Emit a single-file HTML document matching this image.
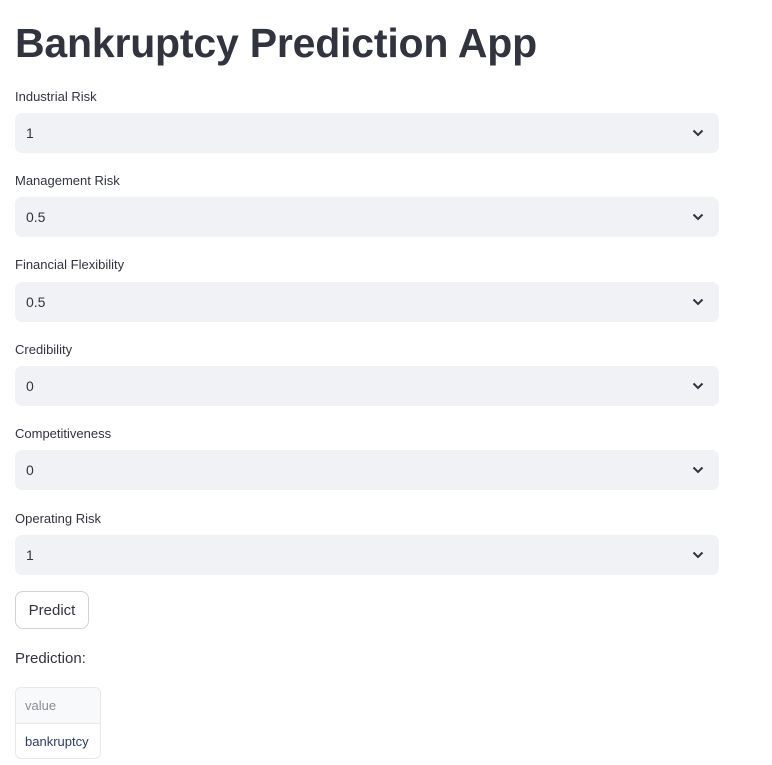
<!DOCTYPE html>
<html><head><style>
body{margin:0;background:#fff;font-family:"Liberation Sans",sans-serif;color:#31333f;width:772px;height:765px;overflow:hidden;position:relative}
h1{position:absolute;left:15px;top:15px;margin:0;font-size:41px;font-weight:bold;letter-spacing:-0.2px;line-height:56px}
.lab{position:absolute;left:15px;font-size:13px;line-height:16px}
.sel{position:absolute;left:15px;width:704px;height:40px;background:#f0f2f6;border-radius:7px;font-size:14px;line-height:40px;box-sizing:border-box;padding-left:11px}
.sel svg{position:absolute;right:15px;top:16px;display:block}
.btn{position:absolute;left:15px;top:591px;width:74px;height:38px;border:1px solid #d0d2d8;border-radius:8px;box-sizing:border-box;font-size:15px;text-align:center;line-height:38px}
.pred{position:absolute;left:15px;top:649px;font-size:15px;line-height:20px}
.tbl{position:absolute;left:15px;top:687px;width:86px;height:72px;border:1px solid #e6e8ec;border-radius:6px;box-sizing:border-box;overflow:hidden;font-size:13px}
.th{height:36px;background:#f8f9fb;border-bottom:1px solid #e6e8ec;color:#8a8d96;line-height:36px;padding-left:9px;box-sizing:border-box}
.td{height:35px;line-height:35px;padding-left:9px;color:#2a3a6e}
</style></head><body>
<h1>Bankruptcy Prediction App</h1>
<div class="lab" style="top:89px">Industrial Risk</div>
<div class="sel" style="top:113px">1<svg width="12" height="8" viewBox="0 0 12 8"><path d="M1.5 1.5L6 6L10.5 1.5" fill="none" stroke="#31333f" stroke-width="2"/></svg></div>
<div class="lab" style="top:173px">Management Risk</div>
<div class="sel" style="top:197px">0.5<svg width="12" height="8" viewBox="0 0 12 8"><path d="M1.5 1.5L6 6L10.5 1.5" fill="none" stroke="#31333f" stroke-width="2"/></svg></div>
<div class="lab" style="top:257px">Financial Flexibility</div>
<div class="sel" style="top:282px">0.5<svg width="12" height="8" viewBox="0 0 12 8"><path d="M1.5 1.5L6 6L10.5 1.5" fill="none" stroke="#31333f" stroke-width="2"/></svg></div>
<div class="lab" style="top:342px">Credibility</div>
<div class="sel" style="top:366px">0<svg width="12" height="8" viewBox="0 0 12 8"><path d="M1.5 1.5L6 6L10.5 1.5" fill="none" stroke="#31333f" stroke-width="2"/></svg></div>
<div class="lab" style="top:426px">Competitiveness</div>
<div class="sel" style="top:450px">0<svg width="12" height="8" viewBox="0 0 12 8"><path d="M1.5 1.5L6 6L10.5 1.5" fill="none" stroke="#31333f" stroke-width="2"/></svg></div>
<div class="lab" style="top:511px">Operating Risk</div>
<div class="sel" style="top:535px">1<svg width="12" height="8" viewBox="0 0 12 8"><path d="M1.5 1.5L6 6L10.5 1.5" fill="none" stroke="#31333f" stroke-width="2"/></svg></div>
<div class="btn">Predict</div>
<div class="pred">Prediction:</div>
<div class="tbl"><div class="th">value</div><div class="td">bankruptcy</div></div>
</body></html>
